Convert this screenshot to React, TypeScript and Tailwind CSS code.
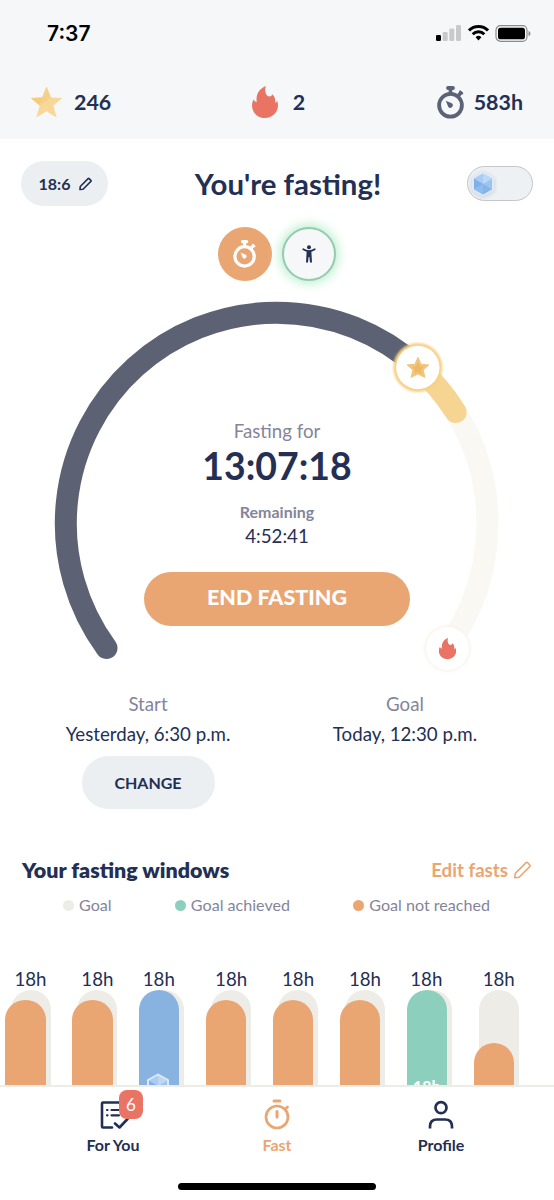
import React from 'react';

interface IconProps {
  className?: string;
}

interface FastBar {
  height: number;
  status: 'missed' | 'achieved' | 'frozen';
}

const bars: FastBar[] = [
  { height: 85, status: 'missed' },
  { height: 85, status: 'missed' },
  { height: 95, status: 'frozen' },
  { height: 85, status: 'missed' },
  { height: 85, status: 'missed' },
  { height: 85, status: 'missed' },
  { height: 95, status: 'achieved' },
  { height: 42, status: 'missed' }
];

const barColors = {
  missed: 'bg-[#eaa672]',
  achieved: 'bg-[#8ccfbd]',
  frozen: 'bg-[#88b3e0]'
};

const StarIcon: React.FC<IconProps> = ({ className }) => (
  <svg className={className} viewBox="0 0 32 32">
    <path d="M16 .5l4.300 10.900 11.400.5-8.900 7.600 3.400 12L16 25.200 5.800 31.500l3.400-12-8.900-7.600 11.400-.5z" fill="#f8d797" />
    <path d="M16 .5l-4.300 10.900-11.400.5 8.900 7.600z" fill="#f4cc7d" />
    <path d="M16 .5l-6.800 19L20.300 11.400z" fill="#f5d088" />
  </svg>
);

const FlameIcon: React.FC<IconProps> = ({ className }) => (
  <svg className={className} viewBox="0 0 26 32" fill="#e97464">
    <path d="M13.800 0C7.600 2.700 3.700 7.600 4.700 16.200 3.200 15.800 2.100 14.900 1.800 13.400.6 15.200 0 17.100 0 19.300 0 26.500 5.700 32 13 32s13-5.500 13-12.700c0-1.700-.3-3.300-.8-4.600-.4 1.200-1.100 1.900-2 2.300.6-3.500-.5-6.700-3.300-9.100.2 1.700-.8 2.700-2.300 2.700-3.900 0-5.300-5.900-3.800-10.600z" />
  </svg>
);

const StopwatchIcon: React.FC<IconProps> = ({ className }) => (
  <svg className={className} viewBox="0 0 28 33" fill="none" stroke="currentColor">
    <circle cx="13.500" cy="19.300" r="11.400" strokeWidth="3.800" />
    <path d="M11 2h5" strokeWidth="3.800" strokeLinecap="round" />
    <path d="M13.500 2v6M21.500 9.500l2.800-3.200" strokeWidth="3.600" />
    <path d="M23.200 5.500l2 1.800" strokeWidth="2.200" strokeLinecap="round" />
    <path d="M8.800 14.700l6 2.600a2.500 2.500 0 1 1-3.600 3.400z" fill="currentColor" stroke="none" />
  </svg>
);

const PencilIcon: React.FC<IconProps & { weight: number }> = ({ className, weight }) => (
  <svg className={className} viewBox="0 0 18 18" fill="none" stroke="currentColor" strokeWidth={weight} strokeLinejoin="round">
    <path d="M1.300 16.700l.5-4.300L12.600 1.600q.7-.6 1.400 0l2.400 2.400q.6.700 0 1.400L5.600 16.200z" />
  </svg>
);

const CrystalIcon: React.FC<IconProps> = ({ className }) => (
  <svg className={className} viewBox="0 0 24 26">
    <path d="M12 1.500l10 5.700v11.600l-10 5.700-10-5.700V7.200z" fill="#9cc4ee" stroke="#dceafa" strokeWidth="2" strokeLinejoin="round" />
    <path d="M12 2.500l9 5.200-9 5.300z" fill="#bcd8f6" />
    <path d="M12 2.500L3 7.700l9 5.300z" fill="#a9ccf2" />
    <path d="M3 7.700v10.600l9-5.300z" fill="#7fb0e6" />
    <path d="M3 18.300l9 5.200V13z" fill="#8fbcec" />
    <path d="M12 13v10.500l9-5.200z" fill="#85b5e9" />
  </svg>
);

const StatusBar: React.FC = () => (
  <div className="h-[66px] pl-[47px] pr-[23px] flex items-center justify-between text-black">
    <span className="font-['Inter',sans-serif] font-semibold text-[21px] leading-none">7:37</span>
    <div className="flex items-center gap-[6px]">
      <svg className="w-[26px] h-[16px]" viewBox="0 0 26 16">
        <rect x="0" y="10" width="5" height="6" rx="1.300" />
        <rect x="6.700" y="7" width="5" height="9" rx="1.300" fill="#c8c9cb" />
        <rect x="13.300" y="3.500" width="5" height="12.500" rx="1.300" fill="#c8c9cb" />
        <rect x="20" y="0" width="5" height="16" rx="1.300" fill="#c8c9cb" />
      </svg>
      <svg className="w-[21px] h-[16px]" viewBox="0 0 21 16" fill="none" stroke="#000" strokeWidth="3">
        <path d="M1 5.400a13.600 13.600 0 0 1 19 0" />
        <path d="M4.700 9.200a8.300 8.300 0 0 1 11.600 0" />
        <path d="M7.600 12.200a4.200 4.200 0 0 1 5.800 0L10.500 15.500z" fill="#000" stroke="none" />
      </svg>
      <svg className="w-[36px] h-[17px]" viewBox="0 0 36 17">
        <rect x="1" y=".7" width="31" height="15.600" rx="4.500" fill="none" stroke="#8b8c8e" strokeWidth="1.200" />
        <rect x="3" y="2.700" width="27" height="11.600" rx="2.600" />
        <path d="M33.500 5.700q2 .9 2 2.800t-2 2.800z" fill="#8b8c8e" />
      </svg>
    </div>
  </div>
);

const Stats: React.FC = () => (
  <div className="h-[72px] pl-[30px] pr-[31px] flex items-center justify-between font-bold text-[21.400px] leading-[22px]">
    <div className="w-[150px] flex items-center gap-[11px]">
      <StarIcon className="w-[33px] h-[32px]" />
      <span>246</span>
    </div>
    <div className="ml-[4px] flex items-center gap-[15px]">
      <FlameIcon className="w-[26px] h-[32px]" />
      <span>2</span>
    </div>
    <div className="w-[150px] flex items-center justify-end gap-[9px]">
      <StopwatchIcon className="w-[28px] h-[33px] text-[#5b6176]" />
      <span>583h</span>
    </div>
  </div>
);

const FastingDial: React.FC = () => (
  <section className="mt-[9px] h-[385px] grid justify-items-center">
    <svg className="col-start-1 row-start-1 w-[554px] h-[385px]" viewBox="0 290 554 385" fill="none">
      <defs>
        <filter id="glow" x="-30%" y="-30%" width="160%" height="160%">
          <feGaussianBlur stdDeviation="1.300" />
        </filter>
      </defs>
      <path d="M455.700 412A210.800 210.800 0 0 1 446.500 648" stroke="#f9f8f2" strokeWidth="22" />
      <path d="M417.500 366.700A210.800 210.800 0 0 1 455.700 412" stroke="#f6d592" strokeWidth="22" strokeLinecap="round" />
      <path d="M106.500 648A210.800 210.800 0 0 1 417.500 366.700" stroke="#5c6174" strokeWidth="22" strokeLinecap="round" />
      <circle cx="417.800" cy="367.500" r="24.500" fill="#f6d084" filter="url(#glow)" />
      <circle cx="417.800" cy="367.500" r="21.700" fill="#fff" />
      <circle cx="447.500" cy="648.500" r="23.500" fill="#f8f6f0" filter="url(#glow)" />
      <circle cx="447.500" cy="648.500" r="21.500" fill="#fff" />
      <path d="M418 357.300l3.100 7 7.700.6-5.600 5 1.700 7.500-6.900-3.500-6.900 3.500 1.700-7.500-5.600-5 7.700-.6z" fill="#f1c67b" stroke="#f1c67b" strokeLinejoin="round" />
      <path d="M418 362l2 4.500 4 .5-3 3 .7 4-3.700-2-3.700 2 .7-4-3-3 4-.5z" fill="#edb966" />
      <svg x="438.800" y="637.500" width="17.400" height="22" viewBox="0 0 26 32" fill="#e97464">
        <path d="M13.800 0C7.600 2.700 3.700 7.600 4.700 16.200 3.200 15.800 2.100 14.900 1.800 13.400.6 15.200 0 17.100 0 19.300 0 26.500 5.700 32 13 32s13-5.500 13-12.700c0-1.700-.3-3.300-.8-4.600-.4 1.200-1.100 1.900-2 2.300.6-3.500-.5-6.700-3.300-9.100.2 1.700-.8 2.700-2.300 2.700-3.900 0-5.300-5.900-3.800-10.600z" />
      </svg>
    </svg>
    <div className="col-start-1 row-start-1 relative pt-[129px] flex flex-col items-center">
      <p className="text-[18.700px] leading-[24px] text-[#84859a]">Fasting for</p>
      <p className="mt-[3px] text-[37.400px] leading-[40px] font-bold">13:07:18</p>
      <p className="mt-[15px] text-[16px] leading-[22px] font-bold text-[#84859a]">Remaining</p>
      <p className="mt-[1px] text-[18.700px] leading-[24px]">4:52:41</p>
      <button className="mt-[24px] w-[266px] h-[54px] pb-[3px] rounded-full bg-[#eaa672] text-white text-[21.500px] font-black">
        END FASTING
      </button>
    </div>
  </section>
);

const FastingWindows: React.FC = () => (
  <section className="mt-[46px]">
    <div className="h-[28px] pl-[22px] pr-[22px] flex items-center justify-between">
      <h2 className="text-[21.450px] font-extrabold">Your fasting windows</h2>
      <button className="flex items-center gap-[5px] text-[18.700px] font-bold text-[#eaa672]">
        Edit fasts
        <PencilIcon className="w-[19px] h-[18px]" weight={1.5} />
      </button>
    </div>
    <div className="mt-[9px] h-[24px] pl-[63px] pr-[64px] flex items-center justify-between text-[16.100px] text-[#84859a]">
      <div className="flex items-center gap-[5px]">
        <span className="w-[11px] h-[11px] rounded-full bg-[#edece6]" />
        Goal
      </div>
      <div className="flex items-center gap-[5px]">
        <span className="w-[11px] h-[11px] rounded-full bg-[#8ccfbd]" />
        Goal achieved
      </div>
      <div className="flex items-center gap-[5px]">
        <span className="w-[11px] h-[11px] rounded-full bg-[#eaa672]" />
        Goal not reached
      </div>
    </div>
    <div className="mt-[50px] pl-[5px] flex overflow-hidden">
      {bars.map((bar, i) => (
        <div key={i} className="w-[66.900px] shrink-0">
          <p className={`h-[23px] text-center text-[18.700px] leading-[24px] ${bar.status === 'missed' ? 'w-[51px]' : 'w-[40px]'}`}>18h</p>
          <div className="relative h-[95px] overflow-hidden">
            <div className="ml-[5.500px] w-[40px] h-[115px] rounded-[20px] bg-[#edece6]" />
            <div
              className={`absolute bottom-0 left-[.4px] w-[40.300px] rounded-t-[20px] overflow-hidden ${barColors[bar.status]}`}
              style={{ height: bar.height }}
            >
              {bar.status === 'frozen' && <CrystalIcon className="absolute top-[83px] left-[7px] w-[24px] h-[26px]" />}
              {bar.status === 'achieved' && (
                <span className="absolute top-[87px] left-0 w-full text-center text-[16px] leading-[20px] font-black text-white">18h</span>
              )}
            </div>
          </div>
        </div>
      ))}
    </div>
  </section>
);

const BottomNav: React.FC = () => (
  <nav className="h-[115px] border-t-2 border-[#edece6] bg-white flex flex-col items-center">
    <div className="w-full h-[96px] pl-[31px] pr-[31px] pt-[12px] flex text-[16px] leading-[20px] font-bold">
      <a className="flex-1 flex flex-col items-center gap-[4px]">
        <div className="relative">
          <svg className="w-[32px] h-[32px]" viewBox="0 0 32 32" fill="none" stroke="currentColor" strokeWidth="2.600" strokeLinecap="round" strokeLinejoin="round">
            <path d="M27 13V4.500q0-1-1-1H6q-1 0-1 1v23q0 1 1 1h9" />
            <path d="M10 11h.5M14.500 11H22M10 16.300h.5M14.500 16.300H22" strokeWidth="2.200" />
            <path d="M18 24.500l4.500 4 8-8.500" />
          </svg>
          <span className="absolute -top-[9px] left-[22px] w-[24px] h-[29px] rounded-[8px] bg-[#e97464] text-white text-[17px] leading-[30px] text-center font-normal">6</span>
        </div>
        For You
      </a>
      <a className="flex-1 flex flex-col items-center gap-[4px] text-[#eaa672]">
        <svg className="w-[32px] h-[32px]" viewBox="0 0 32 32" fill="none" stroke="currentColor" strokeWidth="2.700">
          <circle cx="16" cy="18" r="11" />
          <path d="M13 1.900h6" strokeWidth="3" strokeLinecap="round" />
          <path d="M16 12.500v5.500" strokeWidth="3" strokeLinecap="round" />
          <path d="M24.300 10l2.200-2" strokeLinecap="round" />
        </svg>
        Fast
      </a>
      <a className="flex-1 flex flex-col items-center gap-[4px]">
        <svg className="w-[32px] h-[32px]" viewBox="0 0 32 32" fill="none" stroke="currentColor" strokeWidth="2.700">
          <circle cx="16" cy="8.700" r="5.500" />
          <path d="M5 29.500v-2q0-7 7-7h8q7 0 7 7v2" />
        </svg>
        Profile
      </a>
    </div>
    <div className="w-[198px] h-[7px] rounded-full bg-black" />
  </nav>
);

const App: React.FC = () => {
  return (
    <div className="w-[554px] h-[1200px] overflow-hidden bg-white font-['Lato',sans-serif] text-[#232f53]">
      <header className="h-[139px] bg-[#f5f7f9]">
        <StatusBar />
        <Stats />
      </header>

      <div className="mt-[22px] h-[45px] pl-[21px] pr-[21px] flex items-center justify-between">
        <button className="w-[87px] h-[45px] pl-[2px] rounded-full bg-[#ebeff2] flex items-center justify-center gap-[9px] text-[16px] font-bold">
          18:6
          <PencilIcon className="w-[13px] h-[14px]" weight={2.2} />
        </button>
        <h1 className="ml-[1px] text-[29.400px] leading-[36px] font-bold">You're fasting!</h1>
        <div className="w-[66px] h-[35px] rounded-full border border-[#c6c4cc] bg-[#eef1f4] flex items-center px-[3px]">
          <CrystalIcon className="w-[24px] h-[26px] drop-shadow-sm" />
        </div>
      </div>

      <div className="mt-[21px] h-[54px] flex justify-center gap-[10px]">
        <button className="w-[54px] h-[54px] rounded-full bg-[#eaa672] text-white flex items-center justify-center">
          <StopwatchIcon className="w-[24px] h-[28px]" />
        </button>
        <button className="w-[54px] h-[54px] rounded-full bg-[#f5f7f9] border-[2.500px] border-[#93cbae] shadow-[0_0_12px_2px_#b5ecca] flex items-center justify-center">
          <svg className="w-[14px] h-[18px]" viewBox="0 0 14 18" fill="none" stroke="currentColor" strokeLinecap="round">
            <circle cx="7" cy="2.200" r="2" fill="currentColor" stroke="none" />
            <path d="M1.200 4.200Q7 8 12.800 4.200" strokeWidth="1.700" />
            <path d="M4.700 5.800h4.600L10 17.500H8L7.400 12h-.8L6 17.500H4z" fill="currentColor" stroke="none" />
          </svg>
        </button>
      </div>

      <FastingDial />

      <section className="mt-[17px] px-[20px] h-[118px] flex text-center text-[18.700px] leading-[24px]">
        <div className="w-[256px] flex flex-col items-center">
          <p className="text-[#84859a]">Start</p>
          <p className="mt-[6px]">Yesterday, 6:30 p.m.</p>
          <button className="mt-[10px] w-[133px] h-[53px] rounded-full bg-[#ebeff2] text-[16px] font-bold">CHANGE</button>
        </div>
        <div className="w-[258px] flex flex-col items-center">
          <p className="text-[#84859a]">Goal</p>
          <p className="mt-[6px]">Today, 12:30 p.m.</p>
        </div>
      </section>

      <FastingWindows />
      <BottomNav />
    </div>
  );
};

export default App;
